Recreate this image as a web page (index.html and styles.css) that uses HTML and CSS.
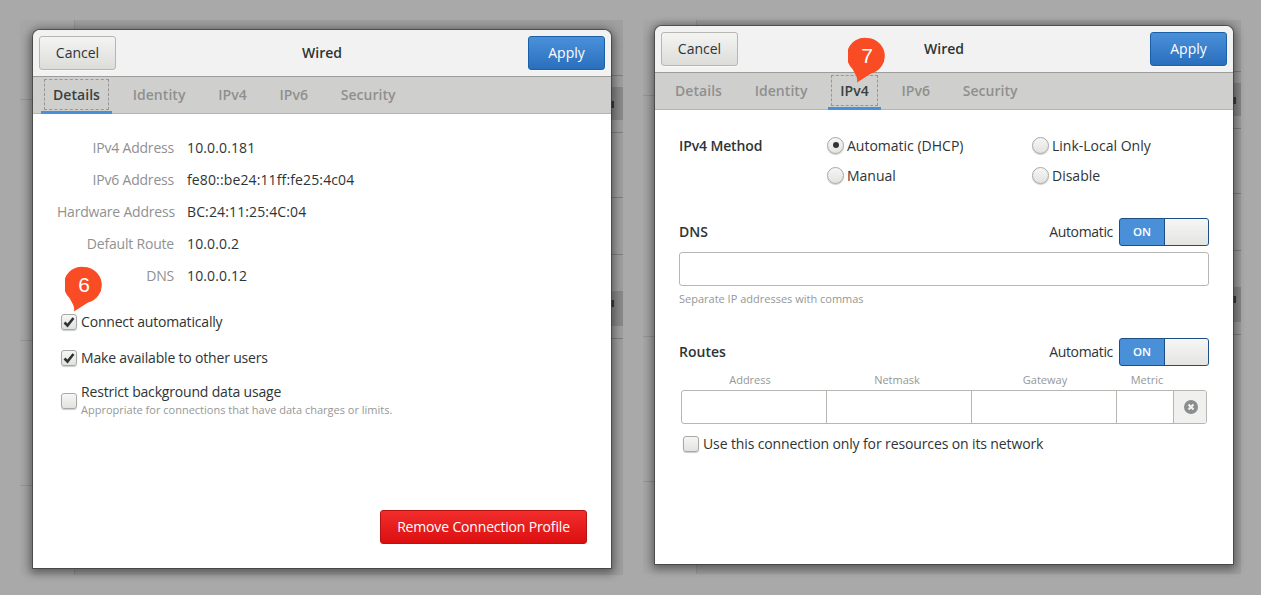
FILE: index.html
```html
<!DOCTYPE html>
<html lang="en">
<head>
  <meta charset="UTF-8" />
  <title>Wired connection settings</title>
  <link rel="stylesheet" href="styles.css">
</head>
<body>

  <!-- windows behind the dialogs -->
  <svg class="panel panel-left" width="603" height="555" viewBox="0 0 603 555">
    <rect width="603" height="555" fill="#9f9f9f"/>
    <rect width="54" height="555" fill="#a6a6a6"/>
    <rect x="54" width="1" height="555" fill="#949494"/>
    <rect y="79" width="54" height="1" fill="#959595"/>
    <rect y="320" width="54" height="1" fill="#959595"/>
    <rect y="465" width="54" height="1" fill="#959595"/>
    <rect x="591" y="67" width="12" height="33" fill="#898989"/>
    <rect x="591" y="55" width="12" height="1" fill="#808080"/>
    <rect x="591" y="112" width="12" height="1" fill="#808080"/>
    <rect x="591" y="177" width="12" height="1" fill="#808080"/>
    <rect x="591" y="234" width="12" height="1" fill="#808080"/>
    <rect x="591" y="271" width="12" height="35" fill="#898989"/>
    <rect x="591" y="318" width="12" height="1" fill="#808080"/>
    <rect x="591" y="81" width="3" height="7" fill="#3c3c3c"/>
    <rect x="591" y="280" width="3" height="7" fill="#3c3c3c"/>
  </svg>
  <svg class="panel panel-right" width="598" height="554" viewBox="0 0 598 554">
    <rect width="598" height="554" fill="#9f9f9f"/>
    <rect width="53" height="554" fill="#a6a6a6"/>
    <rect x="53" width="1" height="554" fill="#949494"/>
    <rect y="75" width="53" height="1" fill="#959595"/>
    <rect y="316" width="53" height="1" fill="#959595"/>
    <rect y="461" width="53" height="1" fill="#959595"/>
    <rect x="590" y="63" width="8" height="33" fill="#898989"/>
    <rect x="590" y="51" width="8" height="1" fill="#808080"/>
    <rect x="590" y="108" width="8" height="1" fill="#808080"/>
    <rect x="590" y="173" width="8" height="1" fill="#808080"/>
    <rect x="590" y="230" width="8" height="1" fill="#808080"/>
    <rect x="590" y="267" width="8" height="35" fill="#898989"/>
    <rect x="590" y="314" width="8" height="1" fill="#808080"/>
    <rect x="590" y="77" width="3" height="7" fill="#3c3c3c"/>
    <rect x="590" y="276" width="3" height="7" fill="#3c3c3c"/>
  </svg>

  <!-- Details -->
  <section class="dialog dialog-left">
    <header class="titlebar">
      <button class="btn">Cancel</button>
      <h1>Wired</h1>
      <button class="btn btn-blue">Apply</button>
    </header>
    <nav class="tabs">
      <a class="tab active"><span>Details</span></a>
      <a class="tab"><span>Identity</span></a>
      <a class="tab"><span>IPv4</span></a>
      <a class="tab"><span>IPv6</span></a>
      <a class="tab"><span>Security</span></a>
    </nav>
    <div class="content details">
      <dl class="facts">
        <dt>IPv4 Address</dt><dd>10.0.0.181</dd>
        <dt>IPv6 Address</dt><dd>fe80::be24:11ff:fe25:4c04</dd>
        <dt>Hardware Address</dt><dd>BC:24:11:25:4C:04</dd>
        <dt>Default Route</dt><dd>10.0.0.2</dd>
        <dt>DNS</dt><dd>10.0.0.12</dd>
      </dl>
      <div class="checks">
        <label class="check">
          <span class="box"><svg width="14" height="14" viewBox="0 0 14 14"><path d="M2.500 7.500l3 3 6-7.500" fill="none" stroke="#2e3436" stroke-width="2.600"/></svg></span>
          Connect automatically
        </label>
        <label class="check">
          <span class="box"><svg width="14" height="14" viewBox="0 0 14 14"><path d="M2.500 7.500l3 3 6-7.500" fill="none" stroke="#2e3436" stroke-width="2.600"/></svg></span>
          Make available to other users
        </label>
        <label class="check check-long">
          <span class="box"></span>
          <span class="check-text">
            Restrict background data usage
            <small>Appropriate for connections that have data charges or limits.</small>
          </span>
        </label>
      </div>
      <button class="btn btn-red">Remove Connection Profile</button>
    </div>
  </section>

  <!-- IPv4 -->
  <section class="dialog dialog-right">
    <header class="titlebar">
      <button class="btn">Cancel</button>
      <h1>Wired</h1>
      <button class="btn btn-blue">Apply</button>
    </header>
    <nav class="tabs">
      <a class="tab"><span>Details</span></a>
      <a class="tab"><span>Identity</span></a>
      <a class="tab active"><span>IPv4</span></a>
      <a class="tab"><span>IPv6</span></a>
      <a class="tab"><span>Security</span></a>
    </nav>
    <div class="content ipv4">
      <div class="method">
        <strong>IPv4 Method</strong>
        <div class="radios">
          <label class="radio"><span class="dot on"></span>Automatic (DHCP)</label>
          <label class="radio"><span class="dot"></span>Link-Local Only</label>
          <label class="radio"><span class="dot"></span>Manual</label>
          <label class="radio"><span class="dot"></span>Disable</label>
        </div>
      </div>

      <div class="section-head dns-head">
        <strong>DNS</strong>
        <span class="auto">Automatic</span>
        <span class="switch"><b>ON</b><i></i></span>
      </div>
      <div class="field"></div>
      <p class="hint">Separate IP addresses with commas</p>

      <div class="section-head routes-head">
        <strong>Routes</strong>
        <span class="auto">Automatic</span>
        <span class="switch"><b>ON</b><i></i></span>
      </div>
      <div class="route-labels">
        <span>Address</span><span>Netmask</span><span>Gateway</span><span>Metric</span>
      </div>
      <div class="route-row">
        <span></span><span></span><span></span><span></span>
        <button class="remove">
          <svg width="14" height="14" viewBox="0 0 14 14"><circle cx="7" cy="7" r="7" fill="#8a8e8f"/><path d="M4.500 4.500l5 5M9.500 4.500l-5 5" stroke="#f0f0f0" stroke-width="2.200"/></svg>
        </button>
      </div>
      <label class="check check-route">
        <span class="box"></span>
        Use this connection only for resources on its network
      </label>
    </div>
  </section>

  <!-- callouts -->
  <div class="pin pin-six">
    <svg width="38" height="46" viewBox="0 0 38 46"><path d="M19 1a18 18 0 0 1 4 35.500L9 45.500C10 40 7 37 4.500 32A18 18 0 0 1 19 1z" fill="#f94c25"/></svg>
    <span>6</span>
  </div>
  <div class="pin pin-seven">
    <svg width="38" height="46" viewBox="0 0 38 46"><path d="M19 1a18 18 0 0 1 4 35.500L9 45.500C10 40 7 37 4.500 32A18 18 0 0 1 19 1z" fill="#f94c25"/></svg>
    <span>7</span>
  </div>

</body>
</html>
```

FILE: styles.css
```css
body {
  margin: 0;
  width: 1261px;
  height: 595px;
  overflow: hidden;
  position: relative;
  background: #a9a9a9;
  font-family: 'Open Sans', sans-serif;
  font-size: 14px;
  color: #2e3436;
}

.panel {
  position: absolute;
  top: 20px;
}

.panel-left { left: 20px; }
.panel-right { left: 643px; }

.dialog {
  position: absolute;
  width: 578px;
  height: 538px;
  display: flex;
  flex-direction: column;
  background: #fff;
  border-radius: 7px 7px 0 0;
  box-shadow: 0 0 0 1px rgba(60, 60, 60, 0.7), 0 2px 10px 3px rgba(0, 0, 0, 0.45);
}

.dialog-left { left: 33px; top: 30px; }
.dialog-right { left: 655px; top: 26px; }

.titlebar {
  height: 46px;
  flex: none;
  display: flex;
  align-items: center;
  justify-content: space-between;
  padding: 0 6px;
  background: #f2f2f2;
  border-radius: 7px 7px 0 0;
  border-bottom: 1px solid #9c9c9a;
}

.titlebar h1 {
  margin: 0 0 2px;
  font-size: 14px;
  font-weight: 600;
}

.btn {
  width: 77px;
  height: 34px;
  padding: 0 0 2px;
  font: inherit;
  color: #2e3436;
  border: 1px solid #b6b6b3;
  border-radius: 3px;
  background: linear-gradient(#f4f4f3, #dcdcd9);
  box-shadow: 0 1px 1px rgba(255, 255, 255, 0.6);
}

.btn-blue {
  color: #fff;
  border-color: #1b5fa8;
  background: linear-gradient(#4a90d9, #2a6fbd);
}

.btn-red {
  width: 207px;
  color: #fff;
  letter-spacing: -0.16px;
  border-color: #b51212;
  background: linear-gradient(#f22c2c, #dc0f0f);
}

.tabs {
  height: 36px;
  flex: none;
  display: flex;
  padding-left: 8px;
  background: #cfcfcd;
  border-bottom: 1px solid #b4b4b2;
  gap: 8.700px;
}

.tab {
  display: flex;
  align-items: center;
  justify-content: center;
  padding: 0 12px;
  margin-bottom: -1px;
  border-bottom: 3px solid transparent;
  font-weight: 600;
  letter-spacing: 0.05px;
  color: #8f8f8f;
}

.tab.active {
  color: #3a3f41;
  border-bottom-color: #4a90d9;
}

.tab.active span {
  outline: 1px dashed #979797;
  padding: 5px 8px;
  margin: 0 -8px;
}

.content {
  flex: 1;
  position: relative;
}

.details {
  padding: 17px 24px 24px 24px;
  display: flex;
  flex-direction: column;
}

.facts {
  margin: 0;
  display: grid;
  grid-template-columns: 117px 1fr;
  column-gap: 13px;
  grid-auto-rows: 32px;
  align-items: center;
}

.facts dt {
  color: #8f9192;
  text-align: right;
  white-space: nowrap;
  letter-spacing: -0.2px;
}

.facts dd {
  margin: 0;
  letter-spacing: 0.13px;
}

.checks {
  margin: 18px 0 0 4px;
  display: flex;
  flex-direction: column;
  gap: 12px;
}

.check {
  display: flex;
  align-items: center;
  gap: 4px;
  min-height: 24px;
  letter-spacing: -0.18px;
}

.box {
  width: 14px;
  height: 14px;
  flex: none;
  margin-top: 2px;
  border: 1px solid #a8a8a6;
  border-radius: 3px;
  background: linear-gradient(#f6f6f5, #e2e2df);
  box-shadow: 0 1px 1px rgba(0, 0, 0, 0.2);
}

.box svg {
  display: block;
}

.check-long {
  margin-top: 2px;
}

.check-long .box {
  margin-top: 0;
}

.check-text {
  display: block;
  line-height: 18px;
}

.check-text small {
  display: block;
  font-size: 11px;
  line-height: 17px;
  letter-spacing: 0;
  color: #959798;
}

.details .btn-red {
  margin-top: auto;
  align-self: flex-end;
}

.ipv4 {
  padding: 20px 24px;
}

.method {
  display: flex;
}

.method strong {
  width: 148px;
  flex: none;
  line-height: 30px;
  margin-top: 1px;
  font-weight: 600;
  letter-spacing: -0.12px;
}

.radios {
  display: grid;
  grid-template-columns: 205px 1fr;
  grid-auto-rows: 30px;
  align-items: center;
}

.radio {
  display: flex;
  align-items: center;
  gap: 3px;
}

.dot {
  width: 15px;
  height: 15px;
  flex: none;
  border: 1px solid #a8a8a6;
  border-radius: 50%;
  background: linear-gradient(#f6f6f5, #e2e2df);
  box-shadow: 0 1px 1px rgba(0, 0, 0, 0.2);
  display: flex;
  align-items: center;
  justify-content: center;
}

.dot.on::after {
  content: "";
  width: 6px;
  height: 6px;
  border-radius: 50%;
  background: #2e3436;
}

.section-head {
  display: flex;
  align-items: center;
  height: 28px;
}

.section-head strong {
  margin-right: auto;
  padding-bottom: 2px;
  font-weight: 600;
}

.dns-head { margin-top: 28px; }
.routes-head { margin-top: 32px; }

.auto {
  margin-right: 6px;
  padding-bottom: 2px;
  letter-spacing: -0.33px;
}

.switch {
  width: 90px;
  height: 28px;
  box-sizing: border-box;
  display: flex;
  border: 1px solid #1c4f86;
  border-radius: 3px;
  background: #4a90d9;
  overflow: hidden;
}

.switch b {
  width: 44px;
  text-align: center;
  line-height: 26px;
  font-size: 11.500px;
  font-weight: 600;
  color: #fff;
}

.switch i {
  flex: 1;
  border-left: 1px solid #1c4f86;
  background: linear-gradient(#f6f6f5, #e4e4e1);
}

.field {
  height: 34px;
  margin-top: 6px;
  box-sizing: border-box;
  border: 1px solid #b6b6b3;
  border-radius: 3px;
  background: #fff;
}

.hint {
  margin: 5px 0 0;
  font-size: 11px;
  line-height: 15px;
  color: #959798;
}

.route-labels {
  display: grid;
  grid-template-columns: 138px 156px 140px 64px;
  margin: 0 2px;
  height: 24px;
  box-sizing: border-box;
  padding-top: 2px;
  align-items: center;
  font-size: 11px;
  color: #959798;
  text-align: center;
}

.route-row {
  display: grid;
  grid-template-columns: 145px 145px 145px 57px 34px;
  margin: 0 2px;
  height: 34px;
  box-sizing: border-box;
  border: 1px solid #b6b6b3;
  border-radius: 3px;
  overflow: hidden;
}

.route-row span {
  border-right: 1px solid #b6b6b3;
}

.remove {
  padding: 0;
  border: 0;
  background: #f0f0ef;
  display: flex;
  align-items: center;
  justify-content: center;
}

.check-route {
  margin: 7px 0 0 4px;
  letter-spacing: -0.12px;
}

.pin {
  position: absolute;
  width: 38px;
  height: 46px;
}

.pin svg {
  display: block;
}

.pin span {
  position: absolute;
  left: 0;
  top: 6px;
  width: 38px;
  text-align: center;
  font-family: 'Liberation Sans', sans-serif;
  font-size: 21px;
  line-height: 26px;
  color: #fff;
}

.pin-six { left: 65px; top: 266px; }
.pin-seven { left: 848px; top: 37px; }
```
